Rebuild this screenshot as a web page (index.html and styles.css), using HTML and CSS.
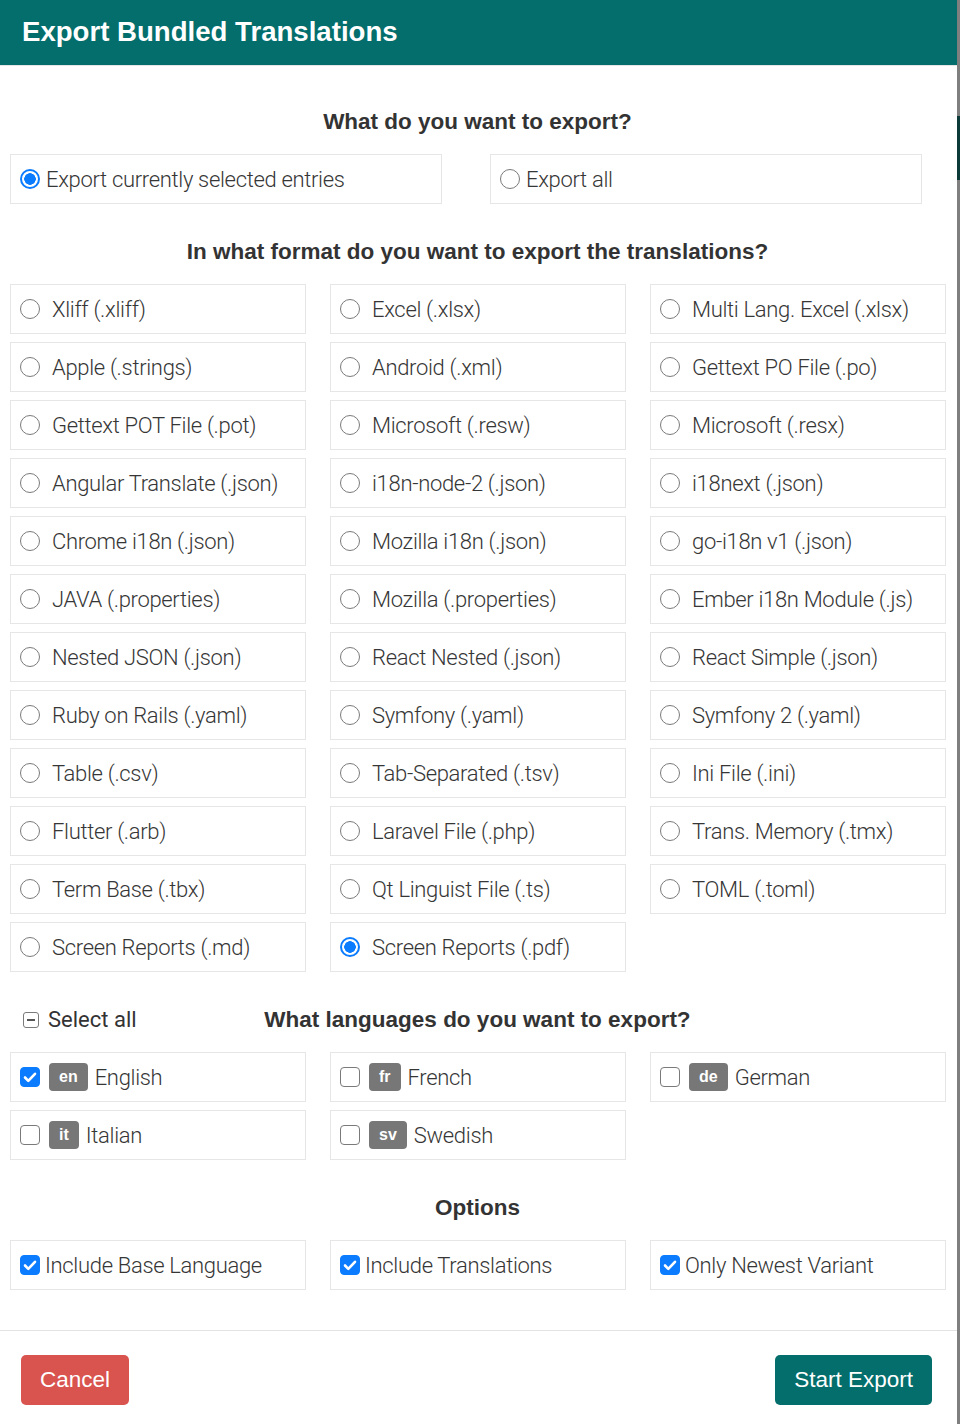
FILE: index.html
```html
<!DOCTYPE html>
<html lang="en">
<head>
<meta charset="utf-8">
<title>Export Bundled Translations</title>
<link rel="stylesheet" href="styles.css">
</head>
<body>
<div class="page">
  <div class="modal">
    <header class="modal-header">
      <h1 class="modal-title">Export Bundled Translations</h1>
    </header>
    <div class="modal-body">
      <h2 class="section-title first">What do you want to export?</h2>
      <div class="scope-grid">
        <div class="opt scope"><span class="radio checked"></span><span class="lbl">Export currently selected entries</span></div>
        <div class="opt scope"><span class="radio"></span><span class="lbl">Export all</span></div>
      </div>

      <h2 class="section-title">In what format do you want to export the translations?</h2>
      <div class="grid3">
        <div class="opt"><span class="radio"></span><span class="lbl">Xliff (.xliff)</span></div>
        <div class="opt"><span class="radio"></span><span class="lbl">Excel (.xlsx)</span></div>
        <div class="opt"><span class="radio"></span><span class="lbl">Multi Lang. Excel (.xlsx)</span></div>
        <div class="opt"><span class="radio"></span><span class="lbl">Apple (.strings)</span></div>
        <div class="opt"><span class="radio"></span><span class="lbl">Android (.xml)</span></div>
        <div class="opt"><span class="radio"></span><span class="lbl">Gettext PO File (.po)</span></div>
        <div class="opt"><span class="radio"></span><span class="lbl">Gettext POT File (.pot)</span></div>
        <div class="opt"><span class="radio"></span><span class="lbl">Microsoft (.resw)</span></div>
        <div class="opt"><span class="radio"></span><span class="lbl">Microsoft (.resx)</span></div>
        <div class="opt"><span class="radio"></span><span class="lbl">Angular Translate (.json)</span></div>
        <div class="opt"><span class="radio"></span><span class="lbl">i18n-node-2 (.json)</span></div>
        <div class="opt"><span class="radio"></span><span class="lbl">i18next (.json)</span></div>
        <div class="opt"><span class="radio"></span><span class="lbl">Chrome i18n (.json)</span></div>
        <div class="opt"><span class="radio"></span><span class="lbl">Mozilla i18n (.json)</span></div>
        <div class="opt"><span class="radio"></span><span class="lbl">go-i18n v1 (.json)</span></div>
        <div class="opt"><span class="radio"></span><span class="lbl">JAVA (.properties)</span></div>
        <div class="opt"><span class="radio"></span><span class="lbl">Mozilla (.properties)</span></div>
        <div class="opt"><span class="radio"></span><span class="lbl">Ember i18n Module (.js)</span></div>
        <div class="opt"><span class="radio"></span><span class="lbl">Nested JSON (.json)</span></div>
        <div class="opt"><span class="radio"></span><span class="lbl">React Nested (.json)</span></div>
        <div class="opt"><span class="radio"></span><span class="lbl">React Simple (.json)</span></div>
        <div class="opt"><span class="radio"></span><span class="lbl">Ruby on Rails (.yaml)</span></div>
        <div class="opt"><span class="radio"></span><span class="lbl">Symfony (.yaml)</span></div>
        <div class="opt"><span class="radio"></span><span class="lbl">Symfony 2 (.yaml)</span></div>
        <div class="opt"><span class="radio"></span><span class="lbl">Table (.csv)</span></div>
        <div class="opt"><span class="radio"></span><span class="lbl">Tab-Separated (.tsv)</span></div>
        <div class="opt"><span class="radio"></span><span class="lbl">Ini File (.ini)</span></div>
        <div class="opt"><span class="radio"></span><span class="lbl">Flutter (.arb)</span></div>
        <div class="opt"><span class="radio"></span><span class="lbl">Laravel File (.php)</span></div>
        <div class="opt"><span class="radio"></span><span class="lbl">Trans. Memory (.tmx)</span></div>
        <div class="opt"><span class="radio"></span><span class="lbl">Term Base (.tbx)</span></div>
        <div class="opt"><span class="radio"></span><span class="lbl">Qt Linguist File (.ts)</span></div>
        <div class="opt"><span class="radio"></span><span class="lbl">TOML (.toml)</span></div>
        <div class="opt"><span class="radio"></span><span class="lbl">Screen Reports (.md)</span></div>
        <div class="opt"><span class="radio checked"></span><span class="lbl">Screen Reports (.pdf)</span></div>
      </div>

      <div class="lang-head">
        <div class="select-all"><span class="mini-box"></span><span>Select all</span></div>
        <h2 class="section-title inline">What languages do you want to export?</h2>
        <div></div>
      </div>
      <div class="grid3">
        <div class="opt lang"><span class="check checked"><svg viewBox="0 0 20 20"><path d="M5 10.5l3.3 3.4L15 6.8"/></svg></span><span class="badge">en</span><span class="lbl">English</span></div>
        <div class="opt lang"><span class="check"></span><span class="badge">fr</span><span class="lbl">French</span></div>
        <div class="opt lang"><span class="check"></span><span class="badge">de</span><span class="lbl">German</span></div>
        <div class="opt lang"><span class="check"></span><span class="badge">it</span><span class="lbl">Italian</span></div>
        <div class="opt lang"><span class="check"></span><span class="badge">sv</span><span class="lbl">Swedish</span></div>
      </div>

      <h2 class="section-title">Options</h2>
      <div class="grid3">
        <div class="opt option"><span class="check checked"><svg viewBox="0 0 20 20"><path d="M5 10.5l3.3 3.4L15 6.8"/></svg></span><span class="lbl">Include Base Language</span></div>
        <div class="opt option"><span class="check checked"><svg viewBox="0 0 20 20"><path d="M5 10.5l3.3 3.4L15 6.8"/></svg></span><span class="lbl">Include Translations</span></div>
        <div class="opt option"><span class="check checked"><svg viewBox="0 0 20 20"><path d="M5 10.5l3.3 3.4L15 6.8"/></svg></span><span class="lbl">Only Newest Variant</span></div>
      </div>
    </div>
    <footer class="modal-footer">
      <button class="btn btn-cancel" type="button">Cancel</button>
      <button class="btn btn-primary" type="button">Start Export</button>
    </footer>
  </div>
  <div class="backdrop-strip"><div class="strip-block"></div></div>
</div>
</body>
</html>
```

FILE: styles.css
```css
* { box-sizing: border-box; }

html, body {
  margin: 0;
  padding: 0;
  background: #ffffff;
}

body {
  font-family: Roboto, "Liberation Sans", Arial, sans-serif;
  color: #333333;
}

.page {
  display: flex;
  width: 960px;
  min-height: 1424px;
}

.modal {
  width: 957px;
  background: #ffffff;
}

.backdrop-strip {
  width: 3px;
  background: #7f7f7f;
}

.strip-block {
  margin-top: 116px;
  height: 64px;
  background: #0c3a39;
}

.modal-header {
  height: 66px;
  background: #036e6c;
  border-bottom: 1px solid #e6e6e6;
  display: flex;
  align-items: center;
  padding: 0 0 2px 22px;
}

.modal-title {
  margin: 0;
  font-family: "Liberation Sans", Arial, sans-serif;
  font-weight: 700;
  font-size: 27.6px;
  color: #ffffff;
}

.modal-body {
  padding: 0 0 40px 10px;
}

.section-title {
  margin: 36px 0 20px;
  font-family: "Liberation Sans", Arial, sans-serif;
  font-weight: 700;
  font-size: 22.5px;
  line-height: 24px;
  text-align: center;
  color: #333333;
  width: 935px;
}

.section-title.first { margin-top: 44px; }

.scope-grid {
  display: grid;
  grid-template-columns: 432px 432px;
  column-gap: 48px;
}

.grid3 {
  display: grid;
  grid-template-columns: repeat(3, 296px);
  column-gap: 24px;
  row-gap: 8px;
}

.opt {
  height: 50px;
  border: 1px solid #e6e6e6;
  display: flex;
  align-items: center;
  padding-left: 9px;
  font-size: 22px;
  font-weight: 300;
  color: #363636;
  white-space: nowrap;
}

.lbl { letter-spacing: -0.32px; }

.radio {
  flex: none;
  width: 20px;
  height: 20px;
  border-radius: 50%;
  border: 1.5px solid #7a7a7a;
  margin-right: 12px;
  background: #ffffff;
}

.scope .radio { margin-right: 6px; }

.radio.checked {
  border: 2px solid #0b7bff;
  background: radial-gradient(circle, #0b7bff 0 5.5px, #ffffff 6px);
}

.check {
  flex: none;
  width: 20px;
  height: 20px;
  border-radius: 4px;
  border: 1.5px solid #7a7a7a;
  background: #ffffff;
  display: flex;
  align-items: center;
  justify-content: center;
}

.check.checked {
  background: #0b7bff;
  border-color: #0b7bff;
}

.check svg {
  width: 20px;
  height: 20px;
  flex: none;
}

.check svg path {
  fill: none;
  stroke: #ffffff;
  stroke-width: 2.6;
  stroke-linecap: round;
  stroke-linejoin: round;
}

.option .check { margin-right: 5px; }
.lang .check { margin-right: 9px; }

.badge {
  flex: none;
  height: 28px;
  padding: 0 10px;
  border-radius: 4px;
  background: #777777;
  color: #ffffff;
  font-family: "Liberation Sans", Arial, sans-serif;
  font-weight: 700;
  font-size: 16px;
  line-height: 28px;
  margin-right: 7px;
}

.lang-head {
  display: grid;
  grid-template-columns: 1fr auto 1fr;
  align-items: center;
  width: 935px;
  margin: 36px 0 20px;
}

.section-title.inline {
  margin: 0;
  width: auto;
}

.select-all {
  display: flex;
  align-items: center;
  font-size: 22px;
  font-weight: 400;
  color: #333333;
  padding-left: 13px;
  line-height: 24px;
}

.mini-box {
  width: 16px;
  height: 16px;
  border: 1.5px solid #7a7a7a;
  border-radius: 3px;
  margin-right: 9px;
  display: flex;
  align-items: center;
  justify-content: center;
}

.mini-box::after {
  content: "";
  width: 8px;
  height: 1.5px;
  background: #555555;
}

.modal-footer {
  border-top: 1px solid #e3e3e3;
  display: flex;
  justify-content: space-between;
  padding: 24px 25px 19px 21px;
}

.btn {
  height: 50px;
  padding: 0 19px;
  border: none;
  border-radius: 5px;
  color: #ffffff;
  font-family: "Liberation Sans", Arial, sans-serif;
  font-size: 22.5px;
  font-weight: 400;
}

.btn-cancel { background: #d9534f; }
.btn-primary { background: #036e6c; }
```
